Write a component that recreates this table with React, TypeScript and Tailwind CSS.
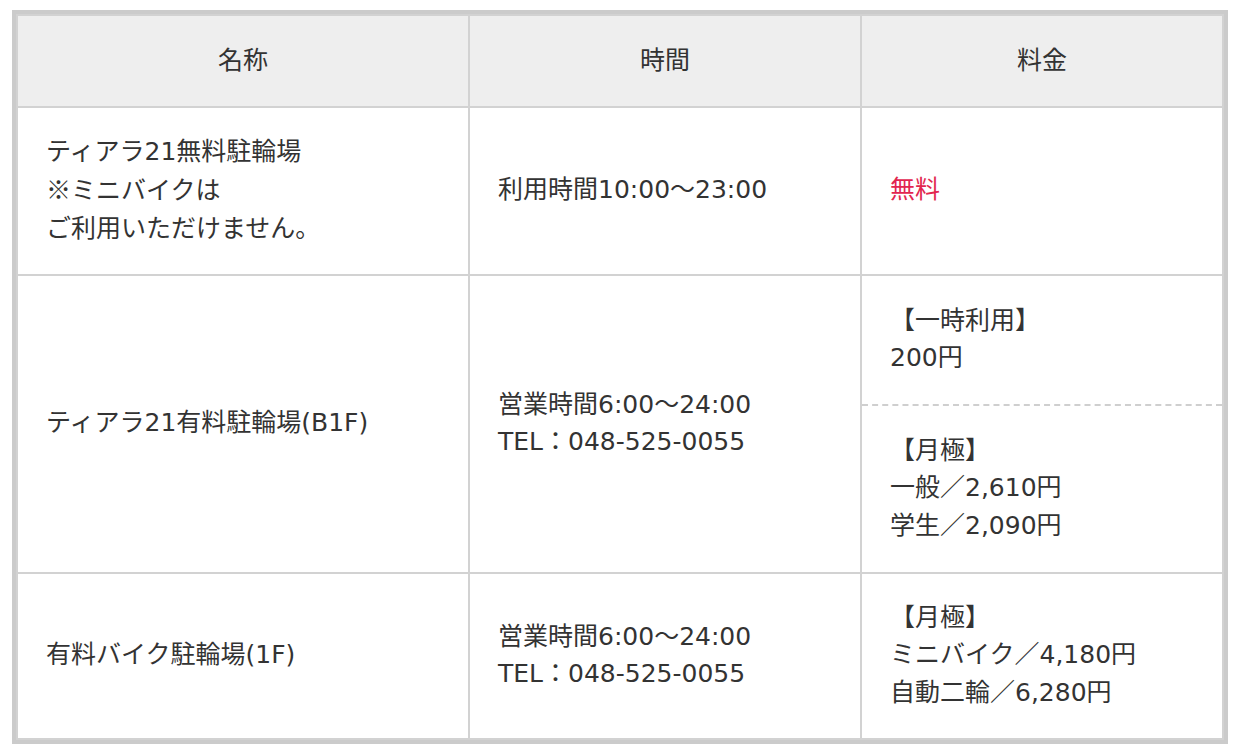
import React from "react";

const font = { fontFamily: '"DejaVu Sans", "Noto Sans CJK JP", sans-serif' };
const cjk = { fontFamily: '"Noto Sans CJK JP", sans-serif' };

function Cell({ children, className = "" }: { children: React.ReactNode; className?: string }) {
  return (
    <div className={`border-r-2 border-b-2 border-[#d2d2d2] flex items-center px-[28px] py-[26px] ${className}`}>
      <div>{children}</div>
    </div>
  );
}

export default function App() {
  return (
    <div className="w-[1244px] h-[756px] bg-white pt-[10px] pl-[12px]" style={font}>
      <div className="w-[1216px] border-4 border-[#cbcbcb] text-[25px] leading-[37.5px] text-[#333333]">
        <div className="grid grid-cols-[452px_392px_362px] border-t-2 border-l-2 border-[#d2d2d2]">
          <Cell className="bg-[#eeeeee] justify-center h-[92px]">名称</Cell>
          <Cell className="bg-[#eeeeee] justify-center h-[92px]">時間</Cell>
          <Cell className="bg-[#eeeeee] justify-center h-[92px]">料金</Cell>

          <Cell className="h-[168px] pb-[28px]">
            ティアラ21無料駐輪場
            <br />
            <span style={cjk}>※</span>ミニバイクは
            <br />
            ご利用いただけません。
          </Cell>
          <Cell className="h-[168px] pb-[28px]">利用時間10:00〜23:00</Cell>
          <Cell className="h-[168px] pb-[28px]">
            <span className="text-[#e2264f]">無料</span>
          </Cell>

          <Cell className="h-[298px] pb-[28px]">ティアラ21有料駐輪場(B1F)</Cell>
          <Cell className="h-[298px] pb-[28px]">
            営業時間6:00〜24:00
            <br />
            TEL：048-525-0055
          </Cell>
          <div className="border-r-2 border-b-2 border-[#d2d2d2] flex flex-col h-[298px]">
            <div className="h-[130px] flex items-center px-[28px] pb-[2px] border-b-2 border-dashed border-[#cfcfcf]">
              <div>
                【一時利用】
                <br />
                200円
              </div>
            </div>
            <div className="flex-1 flex items-center px-[28px] pb-[2px]">
              <div>
                【月極】
                <br />
                一般／2,610円
                <br />
                学生／2,090円
              </div>
            </div>
          </div>

          <Cell className="h-[166px] pb-[28px]">有料バイク駐輪場(1F)</Cell>
          <Cell className="h-[166px] pb-[28px]">
            営業時間6:00〜24:00
            <br />
            TEL：048-525-0055
          </Cell>
          <Cell className="h-[166px] pb-[28px]">
            【月極】
            <br />
            ミニバイク／4,180円
            <br />
            自動二輪／6,280円
          </Cell>
        </div>
      </div>
    </div>
  );
}
